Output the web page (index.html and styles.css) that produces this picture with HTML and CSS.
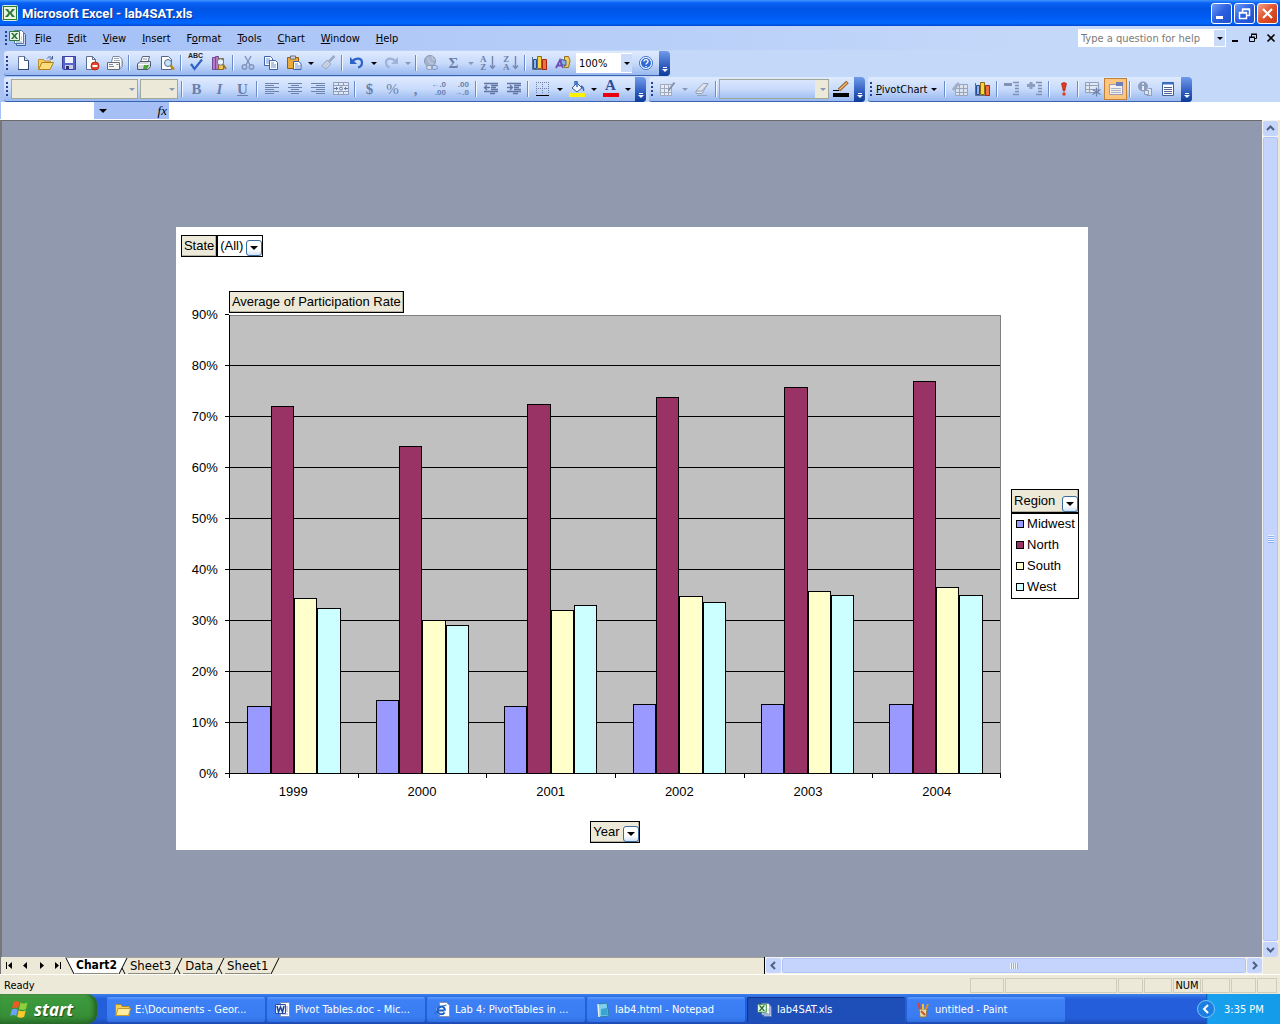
FILE: index.html
```html
<!DOCTYPE html>
<html lang="en">
<head>
    <meta charset="UTF-8">
    <title>Microsoft Excel - lab4SAT.xls</title>
    <link rel="stylesheet" href="styles.css">
</head>
<body>

<!-- Icon set, all on a 16 x 16 grid -->
<svg class="sprite" aria-hidden="true">
  <symbol id="i-excel" viewBox="0 0 16 16"><rect x=".5" y=".5" width="15" height="15" rx="1" fill="#2f7d32" stroke="#dcebd8"/><path d="M2 2h12v12H2z" fill="#e8f3e4"/><path d="M3 4h3l2 3 2-3h3l-3.500 4L13 12h-3l-2-3-2 3H3l3.500-4z" fill="#2c7a33"/></symbol>
  <symbol id="i-book" viewBox="0 0 18 16"><path d="M7.500 2.500h7l2 2v11h-9z" fill="#c9d9f3" stroke="#3f65a0"/><path d="M5.500.5h7l2 2v11h-9z" fill="#fff" stroke="#5578b0"/><path d="M.5 1.500h10v9H.5z" fill="#e6f2e2" stroke="#2c7a33"/><path d="M2 3h2l1.500 2L7 3h2L6.500 6 9 9H7L5.500 7 4 9H2l2.500-3z" fill="#1d7030"/><path d="M12 7h1M12 9h1M7 12h6" stroke="#7f9cc8"/></symbol>
  <symbol id="i-new" viewBox="0 0 16 16"><path d="M3.500 1.500h6l4 4v9h-10z" fill="#fff" stroke="#6478a0"/><path d="M3 14.500h11M13.500 6v9" stroke="#33466c"/><path d="M9.500 1.500v4h4" fill="#cfdcf2" stroke="#44597f"/></symbol>
  <symbol id="i-open" viewBox="0 0 16 16"><path d="M.5 14V4.500h5l1 1.500h6v3" fill="#f6cf62" stroke="#c0902c"/><path d="M.5 14.500L4 7.500h11.500l-3.500 7z" fill="#ffdd78" stroke="#b27d1c"/><path d="M9 3.500c2-2.500 4-2 5 0M14.500 1v3h-3" fill="none" stroke="#3c5c96"/></symbol>
  <symbol id="i-save" viewBox="0 0 16 16"><path d="M1.500 1.500h13v13h-12l-1-1z" fill="#5a62cc" stroke="#3b3f9c"/><path d="M4 2h8v6H4z" fill="#eef2fb"/><path d="M4 10h8v4H4z" fill="#c9cde2"/><path d="M5 11h3v3H5z" fill="#2a2f70"/></symbol>
  <symbol id="i-perm" viewBox="0 0 16 16"><path d="M2.500 1.500h6l3 3v10h-9z" fill="#fff" stroke="#5b6d90"/><path d="M8.500 1.500v3h3" fill="none" stroke="#5b6d90"/><circle cx="11" cy="11" r="4" fill="#e5492c" stroke="#b52a16"/><path d="M8.500 10h5v2h-5z" fill="#fff"/></symbol>
  <symbol id="i-mail" viewBox="0 0 16 16"><path d="M4.500 7l1.500-5.500h6l3 2.500v7" fill="#fff" stroke="#7d88a0"/><path d="M7 3.500h5M7 5.500h6" stroke="#9aa5ba"/><path d="M.5 7.500h12v7H.5z" fill="#f6f5f1" stroke="#626b7d"/><path d="M2 9.500h4M2 11.500h5M9.500 9.500h2" stroke="#7d869a"/><path d="M12.500 14.500l3-3V6" fill="none" stroke="#8a93a6"/></symbol>
  <symbol id="i-print" viewBox="0 0 16 16"><path d="M4.500 7l2-5.500h7L12 7z" fill="#fff" stroke="#58647c"/><path d="M7 4h4" stroke="#8090ae"/><path d="M1.500 9L4 6.500h10.500v5L12 14.500H1.500z" fill="#d3d7df" stroke="#4d566a"/><path d="M2 9.500h10l2-2.500" fill="none" stroke="#fff"/><path d="M8 10h5l-2 4H7z" fill="#4aa832"/></symbol>
  <symbol id="i-preview" viewBox="0 0 16 16"><path d="M2.500 1.500h7l3 3v10h-10z" fill="#fff" stroke="#52648a"/><circle cx="9" cy="8" r="3.500" fill="#c5e3f7" stroke="#59708f"/><path d="M11.500 10.500l3.500 4" stroke="#b88a1d" stroke-width="2.500"/></symbol>
  <symbol id="i-check" viewBox="0 0 16 16"><path d="M3 9l3.500 5L14 4.500" fill="none" stroke="#2f62c4" stroke-width="2.200"/></symbol>
  <symbol id="i-research" viewBox="0 0 16 16"><path d="M1.500 2.500h3v12h-3zM4.500 1.500h3v13h-3z" fill="#b878c8" stroke="#6f4c95"/><path d="M7.500 3.500h5v11h-5z" fill="#efc35a" stroke="#8a6a2b"/><circle cx="9.500" cy="7" r="3.200" fill="#e7f3fb" stroke="#6d7687"/><path d="M12 9.500l3 4.500" stroke="#9b7b26" stroke-width="2"/></symbol>
  <symbol id="i-cut" viewBox="0 0 16 16"><path d="M5 1l5 9M11 1L6 10" stroke="#8495bb" stroke-width="1.500"/><circle cx="4.500" cy="12" r="2.200" fill="none" stroke="#8495bb" stroke-width="1.500"/><circle cx="11.500" cy="12" r="2.200" fill="none" stroke="#8495bb" stroke-width="1.500"/></symbol>
  <symbol id="i-copy" viewBox="0 0 16 16"><path d="M1.500 1.500h6l2 2v7h-8z" fill="#fff" stroke="#3d62ad"/><path d="M3 4h4M3 6h4M3 8h3" stroke="#6c8fd0"/><path d="M6.500 5.500h6l2 2v7h-8z" fill="#fff" stroke="#3d62ad"/><path d="M8 8h3M8 10h5M8 12h5" stroke="#6c8fd0"/></symbol>
  <symbol id="i-paste" viewBox="0 0 16 16"><path d="M1.500 2.500h11v11h-11z" fill="#eaa93b" stroke="#8f5e13"/><path d="M4.500 1h5v3h-5z" fill="#d7d9df" stroke="#6c6f7a"/><path d="M7.500 6.500h5l2.500 2v6H7.500z" fill="#fff" stroke="#3d62ad"/><path d="M9 9h3M9 11h5M9 13h5" stroke="#6c8fd0"/></symbol>
  <symbol id="i-brush" viewBox="0 0 16 16"><path d="M14.500 1L9 6.500" stroke="#9aa9c6" stroke-width="2.500"/><path d="M7 5l4 4-5 5-4.500-3z" fill="#c6cfdf" stroke="#9aa8c2"/></symbol>
  <symbol id="i-undo" viewBox="0 0 16 16"><path d="M3 6.500C7 2 13 3 13 7.500c0 3-2 4.500-4 5" fill="none" stroke="#2c63c7" stroke-width="2.200"/><path d="M1 2v7h7z" fill="#2c63c7"/></symbol>
  <symbol id="i-redo" viewBox="0 0 16 16"><path d="M13 6.500C9 2 3 3 3 7.500c0 3 2 4.500 4 5" fill="none" stroke="#9fb2d8" stroke-width="2.200"/><path d="M15 2v7H8z" fill="#9fb2d8"/></symbol>
  <symbol id="i-link" viewBox="0 0 16 16"><circle cx="7" cy="6" r="5.500" fill="#a6b4cd" stroke="#8797b6"/><path d="M4 3q3 1 2 4l4 2M9 1q-1 3 3 4" fill="none" stroke="#c7d1e2"/><rect x="3.500" y="10.500" width="6" height="4" rx="2" fill="#d4dcec" stroke="#8797b6"/><rect x="8.500" y="10.500" width="6" height="4" rx="2" fill="none" stroke="#8797b6"/></symbol>
  <symbol id="i-down" viewBox="0 0 16 16"><path d="M12.500 1v12M10 10.500l2.500 3 2.500-3" fill="none" stroke="#7387b0" stroke-width="1.400"/></symbol>
  <symbol id="i-chart" viewBox="0 0 16 16"><path d="M.5 2v12.500h14" fill="none" stroke="#5b6d90"/><path d="M1.500 4.500h3v9h-3z" fill="#8db4f0" stroke="#234a96"/><path d="M5.500 1.500h4v12h-4z" fill="#f8d53e" stroke="#8c6b10"/><path d="M10.500 4.500h4v10h-4z" fill="#ee7040" stroke="#a82410"/></symbol>
  <symbol id="i-draw" viewBox="0 0 16 16"><path d="M9.500 1.500h4l1.500 4-1.500 7h-4z" fill="#f3cd5a" stroke="#937022"/><path d="M6 4.500l5 1v5l-5-1z" fill="#8cb2ea" stroke="#3b5f9f"/><path d="M1 13L5 5l3 8M2.500 10.500h4" fill="none" stroke="#6a4fb4" stroke-width="1.800"/></symbol>
  <symbol id="i-help" viewBox="0 0 16 16"><circle cx="8" cy="8" r="6.500" fill="#fff" stroke="#3b6fd0"/><circle cx="8" cy="8" r="5" fill="#2e6bd8"/><path d="M6 6.500c0-2.500 4-2.500 4 0C10 8 8 8 8 9.500M8 11v1" fill="none" stroke="#fff" stroke-width="1.400"/></symbol>
  <symbol id="i-left" viewBox="0 0 16 16"><path d="M1 2.500h14M1 4.500h9M1 6.500h14M1 8.500h9M1 10.500h14M1 12.500h9" stroke="#6d82ad"/></symbol>
  <symbol id="i-center" viewBox="0 0 16 16"><path d="M1 2.500h14M4 4.500h8M1 6.500h14M4 8.500h8M1 10.500h14M4 12.500h8" stroke="#6d82ad"/></symbol>
  <symbol id="i-right" viewBox="0 0 16 16"><path d="M1 2.500h14M6 4.500h9M1 6.500h14M6 8.500h9M1 10.500h14M6 12.500h9" stroke="#6d82ad"/></symbol>
  <symbol id="i-merge" viewBox="0 0 16 16"><path d="M.5 1.500h15v12H.5zM.5 4.500h15M.5 10.500h15M5.500 1.500v3M10.500 1.500v3M5.500 10.500v3M10.500 10.500v3" fill="#e2e8f4" stroke="#8d9dbe"/><path d="M1 7.500h4M11 7.500h4M3.500 6v3M12.500 6v3" stroke="#5f749f"/><circle cx="8" cy="7.500" r="1.500" fill="none" stroke="#5f749f"/></symbol>
  <symbol id="i-outdent" viewBox="0 0 16 16"><path d="M1 2.500h14M8 4.500h7M8 6.500h5M8 8.500h7M1 10.500h14M7 12.500h5M1 6.500h6M4 4L1.500 6.500 4 9" fill="none" stroke="#6075a3" stroke-width="1.300"/></symbol>
  <symbol id="i-indent" viewBox="0 0 16 16"><path d="M1 2.500h14M8 4.500h7M8 6.500h5M8 8.500h7M1 10.500h14M7 12.500h5M1 6.500h6M4 4l2.500 2.500L4 9" fill="none" stroke="#6075a3" stroke-width="1.300"/></symbol>
  <symbol id="i-border" viewBox="0 0 16 16"><path d="M1.500 1v12M7.500 1v12M13.500 1v12M1 1.500h13M1 7.500h13" stroke="#6d7fa6" stroke-dasharray="1 1"/><path d="M1 14.500h13" stroke="#000"/></symbol>
  <symbol id="i-fill" viewBox="0 0 16 16"><path d="M3 7l5-5 5 5-5 4z" fill="#eef4fd" stroke="#3f5a8c"/><path d="M8 6V.5H6V4M12 5q3 1 2.500 5" fill="none" stroke="#3569c4" stroke-width="1.500"/><path d="M0 12h16v4H0z" fill="#fff200"/></symbol>
  <symbol id="i-bar-red" viewBox="0 0 16 16"><path d="M0 12h16v4H0z" fill="#e8000c"/></symbol>
  <symbol id="i-drawborder" viewBox="0 0 16 16"><path d="M.5 3.500h11v11H.5zM.5 7.500h11M.5 11.500h11M4.500 3.500v11M8.500 3.500v11" fill="#e8edf5" stroke="#a0abc0"/><path d="M14.500 1.500l-6 8" stroke="#8492ad" stroke-width="2"/></symbol>
  <symbol id="i-erase" viewBox="0 0 16 16"><path d="M2 10l7-7.500h5L8 12.500H2z" fill="#dde2ec" stroke="#98a4bb"/><path d="M2 10h6l6-7M3 14.500h10" fill="none" stroke="#98a4bb"/></symbol>
  <symbol id="i-pencil" viewBox="0 0 16 16"><path d="M14.500 1L6 9" stroke="#96591f" stroke-width="3.500"/><path d="M14 1.500L6.500 8.500" stroke="#f0c27a" stroke-width="1.500"/><path d="M0 9.500h6" stroke="#000"/><path d="M0 12h16v4H0z" fill="#000"/></symbol>
  <symbol id="i-autofmt" viewBox="0 0 16 16"><path d="M3.500 3.500h12v11h-12zM3.500 7.500h12M3.500 11.500h12M7.500 3.500v11M11.500 3.500v11" fill="#dbe2ee" stroke="#97a5be"/><path d="M1 9l6-7" stroke="#a3afc5" stroke-width="3"/></symbol>
  <symbol id="i-hide" viewBox="0 0 16 16"><path d="M0 3.500h8" stroke="#8092b5" stroke-width="3"/><path d="M9 1.500h6M11 4.500h4M11 7.500h4M11 10.500h4M9 13.500h6" stroke="#7f91b4" stroke-width="1.300"/></symbol>
  <symbol id="i-show" viewBox="0 0 16 16"><path d="M0 4.500h8M4 1v7" stroke="#8c9dbd" stroke-width="3"/><path d="M9 1.500h6M11 4.500h4M11 7.500h4M11 10.500h4M9 13.500h6" stroke="#7f91b4" stroke-width="1.300"/></symbol>
  <symbol id="i-bang" viewBox="0 0 16 16"><path d="M5.500 2.500q2.500-2 5 0L8.800 10H7.200z" fill="#e33a1f" stroke="#a51c0d" stroke-width=".6"/><circle cx="8" cy="13" r="1.700" fill="#e33a1f"/></symbol>
  <symbol id="i-totals" viewBox="0 0 16 16"><path d="M.5 1.500h13v10H.5zM.5 4.500h13M.5 8.500h13M4.500 1.500v10" fill="#e2e8f2" stroke="#909fbb"/><path d="M11.500 6.500v9M7.500 8.500l8 5M15.500 8.500l-8 5" stroke="#6d82ad" stroke-width="1.300"/></symbol>
  <symbol id="i-items" viewBox="0 0 16 16"><path d="M1.500 3.500h13v10h-13z" fill="#f3f0ef" stroke="#9a9bb0"/><path d="M8 1h7v4H8z" fill="#6c7fba"/><path d="M3 7.500h10M3 9.500h10M3 11.500h10" stroke="#a9b1c5"/></symbol>
  <symbol id="i-field" viewBox="0 0 16 16"><circle cx="6" cy="5.500" r="5" fill="#8b9cbd"/><path d="M6 2v1.500M6 5v4" stroke="#fff" stroke-width="1.600"/><path d="M7.500 9.500h4v4h-4zM11.500 7.500h3v7h-5" fill="#dfe6f2" stroke="#8b9cbd"/></symbol>
  <symbol id="i-list" viewBox="0 0 16 16"><path d="M2.500 1.500h11v13h-11z" fill="#fff" stroke="#3f5f9d"/><path d="M2 2.500h12" stroke="#3f6fc9" stroke-width="2"/><path d="M4 6.500h8M4 8.500h8M4 10.500h8M4 12.500h8" stroke="#4d6291"/></symbol>
  <symbol id="i-folder" viewBox="0 0 16 16"><path d="M.5 13.500v-11h5l2 2h7v9z" fill="#f5cf58" stroke="#b38a20"/><path d="M1 13.500l2-7h12.500l-2 7z" fill="#ffec9c" stroke="#c49b31"/></symbol>
  <symbol id="i-word" viewBox="0 0 16 16"><path d="M5.500.5h9v14h-9z" fill="#fff" stroke="#7a8cb8"/><path d="M11 5h2M11 7h2M11 9h2M7 12h6" stroke="#8ea3d0"/><path d="M.5 2.500h10v9H.5z" fill="#e7eefc" stroke="#2a4fa3"/><path d="M2 4l1.500 6 2-5 2 5L9 4" fill="none" stroke="#1e439c" stroke-width="1.500"/></symbol>
  <symbol id="i-ie" viewBox="0 0 16 16"><path d="M4.500.5h7l3 3v11h-10z" fill="#fff" stroke="#8a93a5"/><circle cx="6" cy="8.500" r="4.800" fill="#e9f2ff"/><path d="M9.500 8.500H3M10 8.500c0-5.500-7.500-5-7.500 0 0 4.500 5.500 4.500 7 2" fill="none" stroke="#1e5fc8" stroke-width="2"/><path d="M.5 12Q2 5 11.500 3" fill="none" stroke="#1e5fc8"/></symbol>
  <symbol id="i-notepad" viewBox="0 0 16 16"><path d="M3 2l9-1 2 13-10 1z" fill="#7ed0ee" stroke="#2e7fa8"/><path d="M6 7l6-1 1 7-7 .5z" fill="#3ba3cf"/><path d="M3 2l1 13" stroke="#e9f6fb" stroke-width="1.500"/></symbol>
  <symbol id="i-paint" viewBox="0 0 16 16"><path d="M4 7l8 0-1 8H5z" fill="#e8d9a8" stroke="#8c7740"/><path d="M5 7L3 1" stroke="#e0402c" stroke-width="2"/><path d="M8 7V2" stroke="#f1c232" stroke-width="2"/><path d="M11 7l2-5" stroke="#e58e2a" stroke-width="2"/><path d="M6 9l4 4" stroke="#c0542c" stroke-width="2"/></symbol>
  <symbol id="i-flag" viewBox="0 0 20 20"><path d="M3.500 3q3-2 6 0L8 9.500q-3-2-6 0z" fill="#ef5a24"/><path d="M10.500 3.500q3 2 7 0L16 10q-3.500 2-7 0z" fill="#8ed03c"/><path d="M1.700 10.700q3-2 6 0L6.200 17q-3-2-6 0z" fill="#6aa4f8"/><path d="M8.700 11.200q3.500 2 7 0L14.200 17.700q-3.500 2-7 0z" fill="#fbc92b"/></symbol>
</svg>

<header class="title-bar">
  <svg class="icon"><use href="#i-excel"/></svg>
  <h1>Microsoft Excel - lab4SAT.xls</h1>
  <button class="win-btn" title="Minimize"><svg class="glyph" viewBox="0 0 19 19"><path d="M4 13.500h7" stroke="#fff" stroke-width="3"/></svg></button>
  <button class="win-btn" title="Restore"><svg class="glyph" viewBox="0 0 19 19"><path d="M7.500 8V5.500h7v6H12M4.500 8.500h7v6h-7zM4 9h8M7 5h8" fill="none" stroke="#fff" stroke-width="1.500"/></svg></button>
  <button class="win-btn close" title="Close"><svg class="glyph" viewBox="0 0 19 19"><path d="M5 5l9 9M14 5l-9 9" stroke="#fff" stroke-width="2.200"/></svg></button>
</header>

<nav class="menu-bar">
  <span class="grip"></span>
  <svg class="book"><use href="#i-book"/></svg>
  <button><u>F</u>ile</button>
  <button><u>E</u>dit</button>
  <button><u>V</u>iew</button>
  <button><u>I</u>nsert</button>
  <button>F<u>o</u>rmat</button>
  <button><u>T</u>ools</button>
  <button><u>C</u>hart</button>
  <button><u>W</u>indow</button>
  <button><u>H</u>elp</button>
  <div class="ask">
    <input type="text" placeholder="Type a question for help" aria-label="Type a question for help">
    <button class="combo-arrow" title="Questions"></button>
  </div>
  <button class="doc-btn" title="Minimize window"><svg viewBox="0 0 10 10"><path d="M2 8h6" stroke="#000" stroke-width="2"/></svg></button>
  <button class="doc-btn" title="Restore window"><svg viewBox="0 0 10 10"><path d="M3.500 4V1.500h5v4H7M1.500 4.500h5v4h-5zM3 1h6M1 4h6" fill="none" stroke="#000"/></svg></button>
  <button class="doc-btn" title="Close window"><svg viewBox="0 0 10 10"><path d="M1.500 1.500l7 7M8.500 1.500l-7 7" stroke="#000" stroke-width="1.600"/></svg></button>
</nav>

<div class="tool-row">
  <div class="toolbar">
    <span class="grip"></span>
    <button class="tool" title="New"><svg class="icon"><use href="#i-new"/></svg></button>
    <button class="tool" title="Open"><svg class="icon"><use href="#i-open"/></svg></button>
    <button class="tool" title="Save"><svg class="icon"><use href="#i-save"/></svg></button>
    <button class="tool" title="Permission"><svg class="icon"><use href="#i-perm"/></svg></button>
    <button class="tool" title="E-mail"><svg class="icon"><use href="#i-mail"/></svg></button>
    <span class="sep"></span>
    <button class="tool" title="Print"><svg class="icon"><use href="#i-print"/></svg></button>
    <button class="tool" title="Print Preview"><svg class="icon"><use href="#i-preview"/></svg></button>
    <span class="sep"></span>
    <button class="tool spell" title="Spelling"><span>ABC</span><svg class="icon"><use href="#i-check"/></svg></button>
    <button class="tool" title="Research"><svg class="icon"><use href="#i-research"/></svg></button>
    <span class="sep"></span>
    <button class="tool" title="Cut"><svg class="icon"><use href="#i-cut"/></svg></button>
    <button class="tool" title="Copy"><svg class="icon"><use href="#i-copy"/></svg></button>
    <button class="tool" title="Paste"><svg class="icon"><use href="#i-paste"/></svg></button>
    <button class="drop" title="Paste options"></button>
    <button class="tool" title="Format Painter"><svg class="icon"><use href="#i-brush"/></svg></button>
    <span class="sep"></span>
    <button class="tool" title="Undo"><svg class="icon"><use href="#i-undo"/></svg></button>
    <button class="drop" title="Undo list"></button>
    <button class="tool" title="Redo"><svg class="icon"><use href="#i-redo"/></svg></button>
    <button class="drop off" title="Redo list"></button>
    <span class="sep"></span>
    <button class="tool" title="Hyperlink"><svg class="icon"><use href="#i-link"/></svg></button>
    <button class="tool big" title="AutoSum">Σ</button>
    <button class="drop off" title="AutoSum list"></button>
    <button class="tool sort" title="Sort Ascending"><span>A<br>Z</span><svg class="icon"><use href="#i-down"/></svg></button>
    <button class="tool sort" title="Sort Descending"><span>Z<br>A</span><svg class="icon"><use href="#i-down"/></svg></button>
    <span class="sep"></span>
    <button class="tool" title="Chart Wizard"><svg class="icon"><use href="#i-chart"/></svg></button>
    <button class="tool" title="Drawing"><svg class="icon"><use href="#i-draw"/></svg></button>
    <div class="combo zoom">
      <select aria-label="Zoom"><option>100%</option></select>
      <span class="combo-arrow"></span>
    </div>
    <button class="tool" title="Help"><svg class="icon"><use href="#i-help"/></svg></button>
    <button class="cap" title="Toolbar Options"></button>
  </div>
</div>

<div class="tool-row">
  <div class="toolbar">
    <span class="grip"></span>
    <div class="combo off font">
      <select aria-label="Font" disabled></select>
      <span class="combo-arrow"></span>
    </div>
    <div class="combo off size">
      <select aria-label="Font Size" disabled></select>
      <span class="combo-arrow"></span>
    </div>
    <span class="sep"></span>
    <button class="tool big" title="Bold"><b>B</b></button>
    <button class="tool big" title="Italic"><i>I</i></button>
    <button class="tool big" title="Underline"><u>U</u></button>
    <span class="sep"></span>
    <button class="tool" title="Align Left"><svg class="icon"><use href="#i-left"/></svg></button>
    <button class="tool" title="Center"><svg class="icon"><use href="#i-center"/></svg></button>
    <button class="tool" title="Align Right"><svg class="icon"><use href="#i-right"/></svg></button>
    <button class="tool" title="Merge and Center"><svg class="icon"><use href="#i-merge"/></svg></button>
    <span class="sep"></span>
    <button class="tool big" title="Currency Style">$</button>
    <button class="tool big thin" title="Percent Style">%</button>
    <button class="tool big" title="Comma Style">,</button>
    <button class="tool dec" title="Increase Decimal"><span>←.0<br>.00</span></button>
    <button class="tool dec" title="Decrease Decimal"><span>.00<br>→.0</span></button>
    <span class="sep"></span>
    <button class="tool" title="Decrease Indent"><svg class="icon"><use href="#i-outdent"/></svg></button>
    <button class="tool" title="Increase Indent"><svg class="icon"><use href="#i-indent"/></svg></button>
    <span class="sep"></span>
    <button class="tool" title="Borders"><svg class="icon"><use href="#i-border"/></svg></button>
    <button class="drop" title="Border list"></button>
    <button class="tool" title="Fill Color"><svg class="icon"><use href="#i-fill"/></svg></button>
    <button class="drop" title="Fill list"></button>
    <button class="tool font-color" title="Font Color"><b>A</b><svg class="icon"><use href="#i-bar-red"/></svg></button>
    <button class="drop" title="Font Color list"></button>
    <button class="cap" title="Toolbar Options"></button>
  </div>

  <div class="toolbar">
    <span class="grip"></span>
    <button class="tool" title="Draw Border"><svg class="icon"><use href="#i-drawborder"/></svg></button>
    <button class="drop off" title="Draw Border list"></button>
    <button class="tool" title="Erase Border"><svg class="icon"><use href="#i-erase"/></svg></button>
    <span class="sep"></span>
    <div class="combo off line">
      <select aria-label="Line Style" disabled></select>
      <span class="combo-arrow"></span>
    </div>
    <button class="tool" title="Line Color"><svg class="icon"><use href="#i-pencil"/></svg></button>
    <button class="cap" title="Toolbar Options"></button>
  </div>

  <div class="toolbar">
    <span class="grip"></span>
    <button class="text-tool"><span><u>P</u>ivotChart</span></button>
    <span class="sep"></span>
    <button class="tool" title="Format Report"><svg class="icon"><use href="#i-autofmt"/></svg></button>
    <button class="tool" title="Chart Wizard"><svg class="icon"><use href="#i-chart"/></svg></button>
    <span class="sep"></span>
    <button class="tool" title="Hide Detail"><svg class="icon"><use href="#i-hide"/></svg></button>
    <button class="tool" title="Show Detail"><svg class="icon"><use href="#i-show"/></svg></button>
    <span class="sep"></span>
    <button class="tool" title="Refresh Data"><svg class="icon"><use href="#i-bang"/></svg></button>
    <span class="sep"></span>
    <button class="tool" title="Include Hidden Items"><svg class="icon"><use href="#i-totals"/></svg></button>
    <button class="tool active" title="Always Display Items"><svg class="icon"><use href="#i-items"/></svg></button>
    <span class="sep"></span>
    <button class="tool" title="Field Settings"><svg class="icon"><use href="#i-field"/></svg></button>
    <button class="tool" title="Show Field List"><svg class="icon"><use href="#i-list"/></svg></button>
    <button class="cap" title="Toolbar Options"></button>
  </div>
</div>

<div class="formula-bar">
  <input class="name-box" type="text" aria-label="Name Box">
  <button class="drop" title="Names"></button>
  <button class="fx" title="Insert Function"><i>fx</i></button>
  <input class="formula" type="text" aria-label="Formula">
</div>

<div class="work-area">
  <main class="canvas">
    <section class="sheet">
      <div class="page-field">
        <label class="field" for="state">State</label>
        <div class="field-select">
          <select id="state"><option>(All)</option></select>
          <span class="field-arrow"></span>
        </div>
      </div>

      <div class="chart">
        <button class="field data-field">Average of Participation Rate</button>

        <div class="y-axis">
          <span>90%</span><span>80%</span><span>70%</span><span>60%</span><span>50%</span>
          <span>40%</span><span>30%</span><span>20%</span><span>10%</span><span>0%</span>
        </div>

        <div class="plot">
          <div class="grid-lines"><i></i><i></i><i></i><i></i><i></i><i></i><i></i><i></i><i></i></div>
          <div class="groups">
            <div class="group">
              <div class="bar midwest" style="--v: 13.1"></div>
              <div class="bar north" style="--v: 72.1"></div>
              <div class="bar south" style="--v: 34.3"></div>
              <div class="bar west" style="--v: 32.4"></div>
            </div>
            <div class="group">
              <div class="bar midwest" style="--v: 14.3"></div>
              <div class="bar north" style="--v: 64.2"></div>
              <div class="bar south" style="--v: 29.9"></div>
              <div class="bar west" style="--v: 28.9"></div>
            </div>
            <div class="group">
              <div class="bar midwest" style="--v: 13.1"></div>
              <div class="bar north" style="--v: 72.5"></div>
              <div class="bar south" style="--v: 32"></div>
              <div class="bar west" style="--v: 33"></div>
            </div>
            <div class="group">
              <div class="bar midwest" style="--v: 13.5"></div>
              <div class="bar north" style="--v: 73.7"></div>
              <div class="bar south" style="--v: 34.6"></div>
              <div class="bar west" style="--v: 33.6"></div>
            </div>
            <div class="group">
              <div class="bar midwest" style="--v: 13.5"></div>
              <div class="bar north" style="--v: 75.7"></div>
              <div class="bar south" style="--v: 35.6"></div>
              <div class="bar west" style="--v: 34.8"></div>
            </div>
            <div class="group">
              <div class="bar midwest" style="--v: 13.5"></div>
              <div class="bar north" style="--v: 76.9"></div>
              <div class="bar south" style="--v: 36.5"></div>
              <div class="bar west" style="--v: 34.8"></div>
            </div>
          </div>
        </div>

        <div class="x-axis">
          <span>1999</span><span>2000</span><span>2001</span><span>2002</span><span>2003</span><span>2004</span>
        </div>

        <button class="field year-field">Year<span class="field-arrow"></span></button>

        <div class="legend">
          <button class="field region-field">Region<span class="field-arrow"></span></button>
          <ul>
            <li><span class="key midwest"></span>Midwest</li>
            <li><span class="key north"></span>North</li>
            <li><span class="key south"></span>South</li>
            <li><span class="key west"></span>West</li>
          </ul>
        </div>
      </div>
    </section>
  </main>

  <div class="scroll vertical">
    <button title="Scroll up"><svg viewBox="0 0 15 15"><path d="M4 9l3.500-3.500L11 9" /></svg></button>
    <div class="thumb"><i></i></div>
    <button title="Scroll down"><svg viewBox="0 0 15 15"><path d="M4 6l3.500 3.500L11 6" /></svg></button>
  </div>
</div>

<div class="tab-row">
  <div class="tab-nav">
    <button title="First sheet"><svg viewBox="0 0 9 9"><path d="M1 1h1v7H1zM7 1v7L3 4.500z"/></svg></button>
    <button title="Previous sheet"><svg viewBox="0 0 9 9"><path d="M6 1v7L2 4.500z"/></svg></button>
    <button title="Next sheet"><svg viewBox="0 0 9 9"><path d="M3 1v7l4-3.500z"/></svg></button>
    <button title="Last sheet"><svg viewBox="0 0 9 9"><path d="M7 1h1v7H7zM2 1v7l4-3.500z"/></svg></button>
  </div>
  <div class="tabs">
    <svg class="edge" viewBox="0 0 10 16"><path d="M0 0h10v15H9z" fill="#fff"/><path d="M1 0l8 16" stroke="#000"/></svg>
    <button class="tab current">Chart2</button>
    <svg class="edge" viewBox="0 0 10 16"><path d="M0 0h9L1 15H0z" fill="#fff"/><path d="M9 0L1 16M4 10l3 6" stroke="#000"/></svg>
    <button class="tab">Sheet3</button>
    <svg class="edge" viewBox="0 0 10 16"><path d="M9 0L1 16M4 10l3 6" stroke="#000"/></svg>
    <button class="tab">Data</button>
    <svg class="edge" viewBox="0 0 10 16"><path d="M9 0L1 16M4 10l3 6" stroke="#000"/></svg>
    <button class="tab">Sheet1</button>
    <svg class="edge" viewBox="0 0 10 16"><path d="M9 0L1 16" stroke="#000"/></svg>
  </div>
  <div class="scroll horizontal">
    <button title="Scroll left"><svg viewBox="0 0 15 15"><path d="M9 4L5.500 7.500 9 11"/></svg></button>
    <div class="thumb"><i></i></div>
    <button title="Scroll right"><svg viewBox="0 0 15 15"><path d="M6 4l3.500 3.500L6 11"/></svg></button>
  </div>
</div>

<div class="status-bar">
  <span class="ready">Ready</span>
  <span class="cell w34"></span>
  <span class="cell w112"></span>
  <span class="cell w25"></span>
  <span class="cell w28"></span>
  <span class="cell w28">NUM</span>
  <span class="cell w28"></span>
  <span class="cell w25"></span>
  <span class="cell w20"></span>
</div>

<footer class="taskbar">
  <button class="start"><svg><use href="#i-flag"/></svg>start</button>
  <div class="tasks">
    <button class="task"><svg class="icon"><use href="#i-folder"/></svg>E:\Documents - Geor...</button>
    <button class="task"><svg class="icon"><use href="#i-word"/></svg>Pivot Tables.doc - Mic...</button>
    <button class="task"><svg class="icon"><use href="#i-ie"/></svg>Lab 4: PivotTables in ...</button>
    <button class="task"><svg class="icon"><use href="#i-notepad"/></svg>lab4.html - Notepad</button>
    <button class="task pressed"><svg class="icon"><use href="#i-book"/></svg>lab4SAT.xls</button>
    <button class="task"><svg class="icon"><use href="#i-paint"/></svg>untitled - Paint</button>
  </div>
  <div class="tray">
    <button title="Show hidden icons"><svg viewBox="0 0 18 18"><circle cx="9" cy="9" r="8.500" fill="#1a7fe0" stroke="#7cc4f5"/><path d="M11 5L7 9l4 4" fill="none" stroke="#fff" stroke-width="2"/></svg></button>
    <time>3:35 PM</time>
  </div>
</footer>

</body>
</html>
```

FILE: styles.css
```css
* {
  box-sizing: border-box;
}

body {
  margin: 0;
  height: 100vh;
  display: flex;
  flex-direction: column;
  overflow: hidden;
  background: #ece9d8;
  color: #000;
  font: 11px "DejaVu Sans Condensed", "Noto Sans", sans-serif;
}

button,
input,
select {
  margin: 0;
  padding: 0;
  border: none;
  border-radius: 0;
  background: none;
  color: inherit;
  font: inherit;
  appearance: none;
}

button {
  flex: none;
}

u {
  text-underline-offset: 1px;
}

.sprite {
  position: absolute;
  width: 0;
  height: 0;
}

.icon {
  display: block;
  flex: none;
  width: 16px;
  height: 16px;
}

/* Title bar */
.title-bar {
  flex: none;
  display: flex;
  align-items: center;
  gap: 2px;
  height: 26px;
  padding: 0 2px;
  background: linear-gradient(#3d95ff 0, #0a62f5 3px, #0055e5 9px, #005cf5 18px, #0068ff 23px, #0048d0 100%);
  color: #fff;
}

.title-bar h1 {
  flex: 1;
  margin: 0 0 0 2px;
  font: bold 13px Roboto, sans-serif;
  text-shadow: 1px 1px 0 #0a2f8c;
}

.win-btn {
  width: 21px;
  height: 21px;
  border: 1px solid #fff;
  border-radius: 3px;
  background: linear-gradient(135deg, #6f9bf5, #2a5fe0 50%, #1f50d0);
}

.win-btn.close {
  background: linear-gradient(135deg, #f0a088, #e2502a 50%, #c63a14);
}

.glyph {
  display: block;
  width: 19px;
  height: 19px;
}

/* Menu */
.menu-bar {
  flex: none;
  display: flex;
  align-items: center;
  height: 24px;
  padding-left: 5px;
  background: linear-gradient(90deg, #a3bff6, #c4d8f9 80%);
}

.menu-bar > button {
  padding: 0 8px;
}

.grip {
  flex: none;
  width: 2px;
  height: 14px;
  margin: 0 3px 0 2px;
  background: repeating-linear-gradient(#27408f 0, #27408f 2px, transparent 2px, transparent 4px);
}

.menu-bar .grip {
  margin: 0;
}

.book {
  width: 18px;
  height: 16px;
  margin-left: 2px;
}

.ask {
  display: flex;
  width: 148px;
  height: 18px;
  margin-left: auto;
  background: #fff;
}

.ask input {
  flex: 1;
  min-width: 0;
  padding-left: 3px;
}

.ask input::placeholder {
  color: #7a7a7a;
  opacity: 1;
}

.menu-bar > .doc-btn {
  width: 18px;
  padding: 0 4px;
}

.doc-btn svg {
  display: block;
  width: 10px;
  height: 10px;
}

/* Toolbars */
.tool-row {
  flex: none;
  display: flex;
  gap: 3px;
  height: 26px;
  padding: 1px 4px 0;
  background: linear-gradient(90deg, #a9c3f5, #c4d8f9 50%);
}

.toolbar {
  display: flex;
  align-items: center;
  height: 25px;
  background: linear-gradient(#dfeafe, #c8dbfb 50%, #98b8f0);
  border-bottom: 1px solid #3b62ad;
  border-radius: 3px 4px 4px 3px;
}

.tool {
  display: flex;
  align-items: center;
  justify-content: center;
  width: 23px;
  height: 22px;
  color: #6a7fac;
}

.tool.active {
  border: 1px solid #c07f3a;
  background: #fdc57e;
}

.tool.big {
  font: bold 15px "Liberation Serif", serif;
}

.tool.thin {
  font-weight: normal;
}

.tool.spell,
.tool.font-color {
  display: grid;
  justify-items: center;
}

.tool.spell > *,
.tool.font-color > * {
  grid-area: 1 / 1;
}

.spell span {
  align-self: start;
  color: #222;
  font: bold 7px "Liberation Sans", sans-serif;
}

.font-color b {
  align-self: start;
  color: #2d4f97;
  font: bold 15px/14px "Liberation Serif", serif;
}

.tool.sort {
  position: relative;
}

.sort span {
  position: absolute;
  left: 4px;
  font: bold 9px/8px "Liberation Serif", serif;
}

.dec span {
  font: bold 8px/8px "Liberation Sans", sans-serif;
  text-align: right;
}

.sep {
  flex: none;
  width: 2px;
  height: 16px;
  margin: 0 2px;
  background: linear-gradient(90deg, #6a8ccb 50%, #f1f6ff 50%);
}

.drop {
  width: 11px;
  height: 22px;
}

.drop::before,
.combo-arrow::before,
.field-arrow::before,
.cap::before,
.text-tool::after {
  content: "";
  display: block;
  width: 0;
  margin: auto;
  border: 3px solid transparent;
  border-top-color: #000;
  border-bottom: none;
}

.drop.off::before,
.off .combo-arrow::before {
  border-top-color: #8a98b5;
}

.cap {
  align-self: stretch;
  width: 11px;
  height: 25px;
  margin-left: 2px;
  padding-top: 14px;
  border-radius: 0 4px 4px 0;
  background: linear-gradient(#6f9bea, #3a66c5 50%, #0c3b98);
}

.cap::before {
  border-top-color: #fff;
  box-shadow: 0 -3px 0 -1px #fff;
}

.text-tool {
  display: flex;
  align-items: center;
  width: 67px;
  height: 22px;
  padding: 0 2px 0 1px;
}

.combo {
  display: grid;
  grid-template-columns: 1fr 11px;
  height: 20px;
  background: #fff;
}

.combo select {
  grid-area: 1 / 1 / 2 / 3;
  min-width: 0;
  padding-left: 3px;
}

.combo .combo-arrow {
  grid-area: 1 / 2;
  pointer-events: none;
}

.combo-arrow {
  display: flex;
  align-items: center;
  width: 11px;
  margin: 1px;
  margin-left: 0;
  background: #c9dbf8;
}

.combo.off {
  border: 1px solid #a3a79a;
  background: #ece9d8;
}

.off .combo-arrow {
  background: none;
}

.combo.zoom {
  width: 56px;
  margin: 0 2px;
}

.combo.font {
  width: 127px;
}

.combo.size {
  width: 38px;
  margin: 0 1px 0 2px;
}

.combo.line {
  width: 110px;
  background: linear-gradient(90deg, transparent 95px, #ece9d8 95px);
}

/* Formula bar */
.formula-bar {
  flex: none;
  display: flex;
  align-items: center;
  height: 18px;
  padding-left: 1px;
  background: #a6c0f5;
  border-bottom: 1px solid #fff;
}

.name-box,
.formula {
  height: 17px;
  background: #fff;
}

.name-box {
  width: 93px;
}

.formula {
  flex: 1;
}

.formula-bar .drop {
  width: 18px;
}

.formula-bar .drop::before {
  border-width: 4px 4px 0;
}

.fx {
  width: 57px;
  padding-right: 2px;
  font: 13px/16px "Liberation Serif", serif;
  text-align: right;
}

/* Workspace */
.work-area {
  flex: 1;
  display: flex;
  min-height: 0;
  padding-right: 2px;
}

.canvas {
  flex: 1;
  display: flex;
  align-items: center;
  justify-content: center;
  padding-bottom: 2px;
  background: #9199ae;
  border-top: 1px solid #6b6b6b;
  border-left: 2px solid #77777a;
}

.sheet {
  width: 72.4%;
  padding: 8px 9px 7px 5px;
  background: #fff;
  font: 13px/16px "Liberation Sans", sans-serif;
}

.field {
  display: inline-flex;
  align-items: center;
  height: 22px;
  padding: 0 2px;
  border: 1px solid #000;
  background: #ece9d8;
  font: 13px/16px "Liberation Sans", sans-serif;
  box-shadow: inset -1px -1px 0 #b5b2a2;
}

.field-arrow {
  display: flex;
  align-items: center;
  width: 16px;
  height: 16px;
  border: 1px solid #3c6c9c;
  border-radius: 3px;
  background: linear-gradient(#fff 60%, #d3e2f5);
  pointer-events: none;
}

.field-arrow::before {
  border-width: 4px 4px 0;
}

.page-field {
  display: flex;
  margin-bottom: 34px;
}

.field-select {
  display: grid;
  align-items: end;
  justify-items: end;
  width: 46px;
  height: 22px;
  border: 1px solid #000;
}

.field-select > * {
  grid-area: 1 / 1;
}

.field-select select {
  width: 100%;
  height: 20px;
  padding-left: 2px;
}

.chart {
  display: grid;
  grid-template-columns: 48px 1fr 68px;
  grid-template-rows: 24px 458px auto auto;
}

.data-field {
  grid-area: 1 / 2;
  justify-self: start;
}

.y-axis {
  grid-area: 2 / 1;
  display: flex;
  flex-direction: column;
  justify-content: space-between;
  margin: -8px 0 -9px;
}

.y-axis span {
  display: flex;
  align-items: center;
  justify-content: flex-end;
  gap: 7px;
  height: 16px;
}

.y-axis span::after {
  content: "";
  width: 4px;
  height: 1px;
  background: #000;
}

.plot {
  grid-area: 2 / 2;
  display: grid;
  border-left: 1px solid #000;
  border-right: 1px solid #808080;
  border-bottom: 1px solid #000;
  margin-bottom: -1px;
  background: #c0c0c0;
}

.grid-lines,
.groups {
  grid-area: 1 / 1;
  display: flex;
}

.grid-lines {
  flex-direction: column;
}

.grid-lines i {
  flex: 1;
  border-top: 1px solid #000;
}

.grid-lines i:first-child {
  border-color: #808080;
}

.group {
  flex: 1;
  display: flex;
  align-items: flex-end;
  justify-content: center;
}

/* Four bars and a gap of one and a half bars */
.bar {
  width: calc(100% / 5.5);
  height: calc(var(--v) / 90 * 100%);
  border: 1px solid #000;
  border-bottom: none;
}

.midwest { background: #9999ff; }
.north { background: #993366; }
.south { background: #ffffcc; }
.west { background: #ccffff; }

.x-axis {
  grid-area: 3 / 2;
  display: flex;
  height: 48px;
  background: linear-gradient(#000, #000) right top / 1px 5px no-repeat;
}

.x-axis span {
  flex: 1;
  padding-top: 11px;
  background: linear-gradient(#000, #000) left top / 1px 5px no-repeat;
  text-align: center;
}

.plot,
.x-axis,
.year-field {
  margin-right: 10px;
}

.year-field {
  grid-area: 4 / 2;
  justify-self: center;
}

.year-field,
.region-field {
  align-items: flex-end;
  justify-content: space-between;
  gap: 3px;
  padding: 0 0 0 2px;
  line-height: 20px;
}

.legend {
  grid-area: 2 / 3;
  align-self: center;
}

.region-field {
  width: 100%;
  height: 24px;
  line-height: 22px;
}

.legend ul {
  margin: 0;
  padding: 0 0 0 4px;
  list-style: none;
  border: 1px solid #000;
}

.legend li {
  display: flex;
  align-items: center;
  gap: 3px;
  height: 21px;
}

.key {
  width: 8px;
  height: 8px;
  border: 1px solid #000;
}

/* Scroll bars */
.scroll {
  display: flex;
  gap: 1px;
  background: #f4f3ee;
}

.scroll button {
  width: 15px;
  height: 15px;
  border-radius: 2px;
  background: #c5d5fc;
}

.scroll svg {
  display: block;
  fill: none;
  stroke: #4d6185;
  stroke-width: 2;
}

.thumb {
  flex: 1;
  display: flex;
  align-items: center;
  justify-content: center;
  border: 1px solid #b0c4f6;
  border-radius: 2px;
  background: #c5d4fd;
}

.vertical {
  flex-direction: column;
  width: 16px;
  padding: 1px 0 0 1px;
}

.vertical i {
  width: 6px;
  height: 8px;
  background: repeating-linear-gradient(#eef4fe 0, #eef4fe 1px, #8cb0f8 1px, #8cb0f8 2px);
}

.horizontal {
  width: 499px;
  margin-right: 17px;
  padding: 1px;
  border-left: 1px solid #000;
}

.horizontal i {
  width: 8px;
  height: 6px;
  background: repeating-linear-gradient(90deg, #eef4fe 0, #eef4fe 1px, #8cb0f8 1px, #8cb0f8 2px);
}

/* Sheet tabs */
.tab-row {
  flex: none;
  display: flex;
  justify-content: space-between;
  height: 17px;
  border-left: 1px solid #77777a;
}

.tab-nav {
  display: flex;
}

.tab-nav button {
  width: 16px;
}

.tab-nav svg {
  display: block;
  width: 9px;
  height: 9px;
  margin: auto;
}

.tabs {
  flex: 1;
  display: flex;
  align-items: flex-start;
  height: 17px;
  border-top: 1px solid #a3a193;
}

.edge {
  width: 10px;
  height: 16px;
}

.tab {
  height: 16px;
  padding: 0 2px;
  border-bottom: 1px solid #8d8b7d;
  font-size: 13px;
  line-height: 15px;
}

.tab.current {
  padding: 0 1px;
  background: #fff;
  font-size: 12px;
  font-weight: bold;
}

/* Status bar */
.status-bar {
  flex: none;
  display: flex;
  align-items: center;
  gap: 1px;
  height: 20px;
  padding: 2px 3px 0 4px;
  border-top: 1px solid #fff;
}

.ready {
  flex: 1;
}

.cell {
  height: 15px;
  border: 1px solid #d0cdbd;
  text-align: center;
}

.w20 { width: 20px; }
.w25 { width: 25px; }
.w28 { width: 28px; }
.w34 { width: 34px; }
.w112 { width: 112px; }

/* Task bar */
.taskbar {
  flex: none;
  display: flex;
  height: 30px;
  background: linear-gradient(#3a80ee 0, #3273e6 2px, #245edb 5px, #245edb 24px, #1d49b0 100%);
  color: #fff;
}

.start {
  display: flex;
  align-items: center;
  gap: 4px;
  width: 97px;
  padding-left: 10px;
  border-radius: 0 10px 10px 0;
  background: linear-gradient(#5fac5c 0, #3c9a3c 4px, #378f37 22px, #2a702b 100%);
  box-shadow: inset -3px 0 4px #236323;
  font: italic bold 17px "Open Sans", sans-serif;
  text-shadow: 1px 1px 1px #1f4f1f;
}

.start svg {
  width: 20px;
  height: 20px;
}

.tasks {
  flex: 1;
  display: flex;
  gap: 2px;
  padding: 3px 0 2px 10px;
}

.task {
  flex: 0 1 158px;
  display: flex;
  align-items: center;
  gap: 4px;
  min-width: 0;
  padding-left: 8px;
  border-radius: 2px;
  background: linear-gradient(#5f9bff 0, #3d80f5 3px, #3a7cf2 80%, #3070e0);
  white-space: nowrap;
}

.task.pressed {
  padding-left: 10px;
  background: #1e4fb8;
  box-shadow: inset 1px 1px 1px #12358a;
}

.tray {
  display: flex;
  align-items: center;
  gap: 9px;
  width: 83px;
  background: linear-gradient(90deg, transparent 9px, #0a4fb5 9px, #18a0ee 11px, #139bea);
}

.tray svg {
  display: block;
  width: 18px;
  height: 18px;
}
```
